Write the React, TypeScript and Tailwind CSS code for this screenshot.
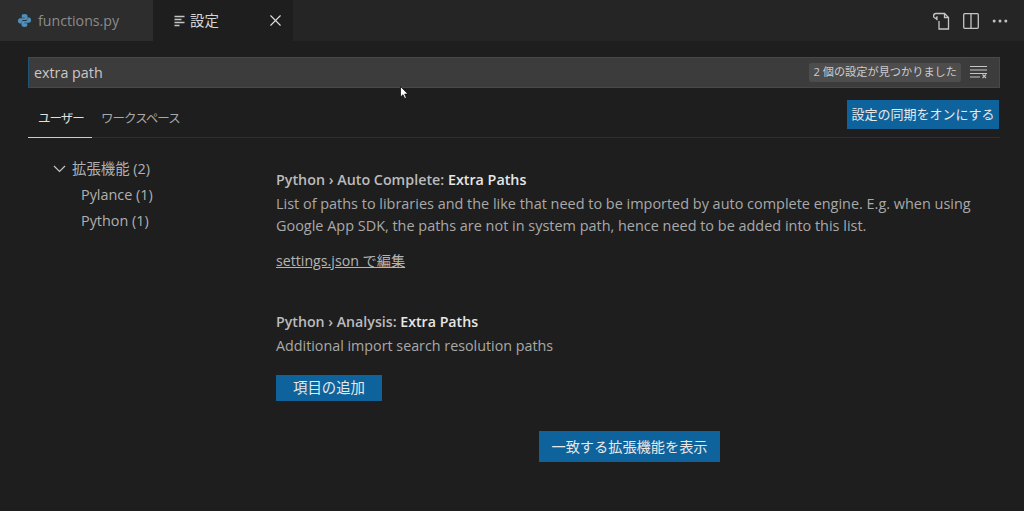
import { Ellipsis, X } from "lucide-react";

const font = { fontFamily: '"Open Sans", "Noto Sans CJK JP", sans-serif' };

function PyIcon() {
  return (
    <svg width="15" height="15" viewBox="0 0 16 16">
      <path d="M7.900 1C5.400 1 5 2 5 3.100V5h3.200v.6H3.400C2 5.600 1 6.500 1 8.300s1 2.900 2.200 2.900H5V9.400c0-1.200 1-2 2.100-2h2.600c.9 0 1.500-.7 1.500-1.500V3.100C11.200 2 10.200 1 7.900 1z" fill="#4d8fbd" />
      <path d="M8.100 15c2.500 0 2.900-1 2.900-2.100V11H7.800v-.6h4.800c1.400 0 2.400-.9 2.400-2.700s-1-2.900-2.200-2.900H11v1.800c0 1.200-1 2-2.100 2H6.300c-.9 0-1.500.7-1.500 1.500v2.800C4.800 14 5.800 15 8.100 15z" fill="#4d8fbd" />
    </svg>
  );
}

function ListIcon() {
  return (
    <svg width="14" height="14" viewBox="0 0 14 14" stroke="#c5c5c5" strokeWidth="1.400" fill="none">
      <path d="M1.500 2.500h10M1.500 5.500h7M1.500 8.500h10M1.500 11.500h5" />
    </svg>
  );
}

function ClearFilterIcon() {
  return (
    <svg width="20" height="16" viewBox="0 0 20 16" stroke="#c5c5c5" strokeWidth="1.100" fill="none">
      <path d="M0 1.500h17M0 5h17M0 8.500h17M0 12h10" />
      <path d="M12.500 9.500l3.500 3.500M16 9.500l-3.500 3.500" />
    </svg>
  );
}

function OpenJsonIcon() {
  return (
    <svg width="20" height="20" viewBox="0 0 20 20" stroke="#c5c5c5" strokeWidth="1.300" fill="none">
      <path d="M8 2.500h5.500l4 4v11.500H8v-8" />
      <path d="M13.500 2.500v4h4" />
      <path d="M8.500 2.500H5a2.400 2.400 0 0 0 0 4.800h1.500M6.500 5.500L4.800 7.300l1.700 1.800" />
    </svg>
  );
}

function SplitIcon() {
  return (
    <svg width="16" height="16" viewBox="0 0 16 16" stroke="#c5c5c5" strokeWidth="1.300" fill="none">
      <rect x=".7" y=".7" width="14.600" height="14.600" rx="1" />
      <path d="M8 1v14" />
    </svg>
  );
}

export default function App() {
  return (
    <div className="relative h-[511px] w-[1024px] overflow-hidden bg-[#1e1e1e] text-[14px] text-[#cccccc]" style={font}>
      <div className="flex h-[41px] items-stretch bg-[#252526]">
        <div className="flex w-[153px] items-center gap-[6px] bg-[#2d2d2d] pl-[17px] text-[14.200px] text-[#8b8b8b]">
          <PyIcon />
          <span>functions.py</span>
        </div>
        <div className="flex w-[140px] items-center bg-[#1e1e1e] pl-[20px] pr-[8px]">
          <ListIcon />
          <span className="ml-[3px] whitespace-nowrap text-[14.500px] text-[#d4d4d4]">設定</span>
          <X size={19} strokeWidth={1.400} className="ml-auto text-[#e0e0e0]" />
        </div>
        <div className="ml-auto flex items-center pr-[14px] text-[#c5c5c5]">
          <OpenJsonIcon />
          <span className="ml-[12px] flex"><SplitIcon /></span>
          <Ellipsis size={20} strokeWidth={1.600} className="ml-[11px]" />
        </div>
      </div>

      <div className="pl-[28px] pr-[24px] pt-[16px]">
        <div className="flex h-[31px] items-center border border-[#1f5478] bg-[#3c3c3c] pl-[5px] pr-[9px]">
          <span className="text-[14.300px] text-[#c8c8c8]">extra path</span>
          <span className="ml-auto whitespace-nowrap rounded-[2px] bg-[#4d4d4d] px-[4px] py-[1px] text-[11.200px] text-[#cccccc]">2 個の設定が見つかりました</span>
          <span className="ml-[9px] flex"><ClearFilterIcon /></span>
        </div>

        <div className="mt-[12px] flex h-[38px] items-start justify-between border-b border-[#2f2f2f]">
          <div className="flex whitespace-nowrap text-[12.500px] tracking-[-1px]">
            <div className="h-[38px] w-[64px] border-b border-[#cccccc] pl-[10px] pt-[10px] text-[#e0e0e0]">ユーザー</div>
            <div className="pl-[9px] pt-[10px] text-[#a8a8a8]">ワークスペース</div>
          </div>
          <button className="mr-[1px] h-[29px] w-[152px] whitespace-nowrap bg-[#0e639c] text-[13px] text-[#e8e8e8]">設定の同期をオンにする</button>
        </div>

        <div className="flex">
          <div className="w-[248px] shrink-0 pt-[18px] text-[14.400px] text-[#b0b0b0]">
            <div className="flex h-[26px] items-center pl-[25px]">
              <svg width="13" height="8" viewBox="0 0 13 8" stroke="#c5c5c5" strokeWidth="1.200" fill="none">
                <path d="M1 1l5.500 5.500L12 1" />
              </svg>
              <span className="ml-[6px] whitespace-nowrap">拡張機能 (2)</span>
            </div>
            <div className="flex h-[26px] items-center pl-[53px]">Pylance (1)</div>
            <div className="flex h-[26px] items-center pl-[53px]">Python (1)</div>
          </div>

          <div className="flex-1 pt-[32px]">
            <div className="text-[14.300px] font-semibold leading-[20px] text-[#bbbbbb]">
              Python › Auto Complete: <span className="text-[#e7e7e7]">Extra Paths</span>
            </div>
            <p className="mt-[3px] w-[710px] text-[14.450px] leading-[22px] text-[#a9a9a9]">
              List of paths to libraries and the like that need to be imported by auto complete engine. E.g. when using Google App SDK, the paths are not in system path, hence need to be added into this list.
            </p>
            <div className="mt-[14px] text-[14.200px] leading-[20px] text-[#b4b4b4] underline">settings.json で編集</div>

            <div className="mt-[41px] text-[14.200px] font-semibold leading-[20px] text-[#bbbbbb]">
              Python › Analysis: <span className="text-[#e7e7e7]">Extra Paths</span>
            </div>
            <p className="mt-[4px] text-[14.300px] leading-[20px] text-[#a9a9a9]">Additional import search resolution paths</p>
            <button className="mt-[19px] block h-[26px] w-[106px] bg-[#0e639c] text-[14.400px] text-[#e8e8e8]">項目の追加</button>
            <button className="ml-[263px] mt-[30px] block h-[31px] w-[181px] bg-[#0e639c] text-[14.200px] text-[#e8e8e8]">一致する拡張機能を表示</button>
          </div>
        </div>
      </div>

      <svg className="absolute left-[400px] top-[86px]" width="9" height="14" viewBox="0 0 9 14">
        <path d="M.5.500v10.500l2.500-2.300 1.700 3.800 1.700-.7-1.700-3.700h3.300z" fill="#fff" stroke="#000" strokeWidth=".7" />
      </svg>
    </div>
  );
}
